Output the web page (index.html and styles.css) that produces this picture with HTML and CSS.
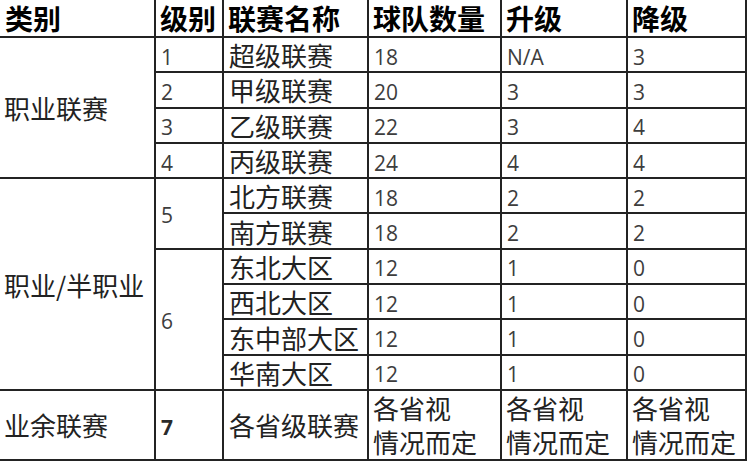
FILE: index.html
```html
<!DOCTYPE html>
<html lang="zh-CN">
<head>
<meta charset="utf-8">
<title>联赛体系</title>
<link rel="stylesheet" href="styles.css">
</head>
<body>
<table class="league">
  <colgroup>
    <col class="c1"><col class="c2"><col class="c3"><col class="c4"><col class="c5"><col class="c6">
  </colgroup>
  <thead>
    <tr class="head">
      <th class="first">类别</th><th>级别</th><th>联赛名称</th><th>球队数量</th><th>升级</th><th>降级</th>
    </tr>
  </thead>
  <tbody>
    <tr class="r"><td class="first cn" rowspan="4">职业联赛</td><td class="num">1</td><td class="cn">超级联赛</td><td class="num">18</td><td class="num">N/A</td><td class="num">3</td></tr>
    <tr class="r"><td class="num">2</td><td class="cn">甲级联赛</td><td class="num">20</td><td class="num">3</td><td class="num">3</td></tr>
    <tr class="r"><td class="num">3</td><td class="cn">乙级联赛</td><td class="num">22</td><td class="num">3</td><td class="num">4</td></tr>
    <tr class="r"><td class="num">4</td><td class="cn">丙级联赛</td><td class="num">24</td><td class="num">4</td><td class="num">4</td></tr>
    <tr class="r"><td class="first cn" rowspan="6">职业/半职业</td><td class="num" rowspan="2">5</td><td class="cn">北方联赛</td><td class="num">18</td><td class="num">2</td><td class="num">2</td></tr>
    <tr class="r"><td class="cn">南方联赛</td><td class="num">18</td><td class="num">2</td><td class="num">2</td></tr>
    <tr class="r"><td class="num" rowspan="4">6</td><td class="cn">东北大区</td><td class="num">12</td><td class="num">1</td><td class="num">0</td></tr>
    <tr class="r"><td class="cn">西北大区</td><td class="num">12</td><td class="num">1</td><td class="num">0</td></tr>
    <tr class="r"><td class="cn">东中部大区</td><td class="num">12</td><td class="num">1</td><td class="num">0</td></tr>
    <tr class="r"><td class="cn">华南大区</td><td class="num">12</td><td class="num">1</td><td class="num">0</td></tr>
    <tr class="last"><td class="first cn">业余联赛</td><td class="num bold">7</td><td class="cn">各省级联赛</td><td class="cn two">各省视<br>情况而定</td><td class="cn two">各省视<br>情况而定</td><td class="cn two">各省视<br>情况而定</td></tr>
  </tbody>
</table>
</body>
</html>
```

FILE: styles.css
```css
html, body {
  margin: 0;
  padding: 0;
  background: #ffffff;
}

.league {
  table-layout: fixed;
  border-collapse: separate;
  border-spacing: 0;
  width: 747px;
  font-family: "Noto Sans CJK SC", "Noto Sans", sans-serif;
  color: #1a1a1a;
}

.c1 { width: 156px; }
.c2 { width: 68px; }
.c3 { width: 145px; }
.c4 { width: 133px; }
.c5 { width: 126px; }
.c6 { width: 119px; }

.league th,
.league td {
  box-sizing: border-box;
  border-right: 2px solid #232323;
  border-bottom: 2px solid #232323;
  padding: 0 0 0 5px;
  text-align: left;
  white-space: nowrap;
}

.league th {
  font-weight: 700;
  font-size: 28px;
  line-height: 34px;
  color: #000;
  vertical-align: middle;
  padding-left: 4px;
}

.league th.first {
  padding-left: 5px;
}

.league .head {
  height: 38px;
}

.league .r {
  height: 35.3px;
}

.league .last {
  height: 69px;
}

.league .cn {
  font-size: 26px;
  line-height: 33px;
  vertical-align: middle;
  color: #222222;
}

.league td.first {
  padding-left: 4px;
}

.league td.num {
  font-family: "Open Sans", "Noto Sans", sans-serif;
  font-size: 21px;
  line-height: 26px;
  color: #3d3d3d;
  vertical-align: middle;
  padding-top: 4px;
  padding-left: 5px;
}

.league td.bold {
  font-weight: 700;
  color: #2a2a2a;
}

.league td.two {
  line-height: 34px;
  padding-top: 0;
  padding-left: 4px;
  vertical-align: top;
}
```
